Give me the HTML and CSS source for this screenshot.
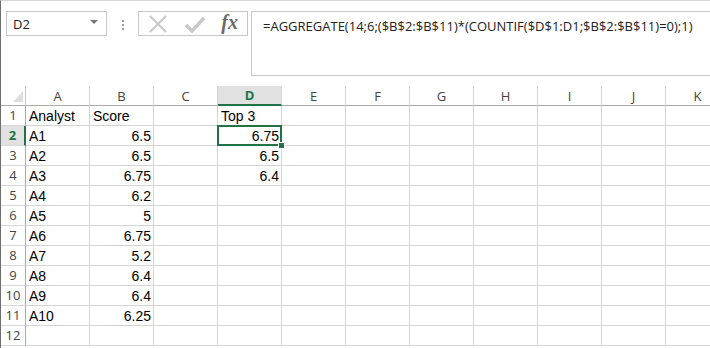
FILE: index.html
```html
<!DOCTYPE html>
<html lang="en">
<head>
    <meta charset="UTF-8">
    <title>Top 3 - AGGREGATE</title>
    <link rel="stylesheet" href="styles.css">
</head>
<body>
    <div class="sheet">
        <!-- Name box and formula bar -->
        <div class="toolbar">
            <div class="name-box">
                <span>D2</span>
                <span class="arrow"></span>
            </div>
            <div class="grip">
                <span></span><span></span><span></span>
            </div>
            <div class="fx-buttons">
                <svg class="fx-icon" width="20" height="20" viewBox="0 0 20 20">
                    <path d="M2 2 L18 18 M18 2 L2 18" stroke="#c8c8c8" stroke-width="2" fill="none"/>
                </svg>
                <svg class="fx-icon" width="22" height="20" viewBox="0 0 22 20">
                    <path d="M2 11 L8 17 L20 4" stroke="#c8c8c8" stroke-width="3.5" fill="none"/>
                </svg>
                <span class="fx-label">fx</span>
            </div>
            <div class="formula-bar">=AGGREGATE(14;6;($B$2:$B$11)*(COUNTIF($D$1:D1;$B$2:$B$11)=0);1)</div>
        </div>

        <!-- Worksheet grid -->
        <div class="grid" id="grid"></div>
    </div>

    <script>
        const columns = ['A', 'B', 'C', 'D', 'E', 'F', 'G', 'H', 'I', 'J', 'K'];
        const data = {
            1: { A: 'Analyst', B: 'Score', D: 'Top 3' },
            2: { A: 'A1', B: '6.5', D: '6.75' },
            3: { A: 'A2', B: '6.5', D: '6.5' },
            4: { A: 'A3', B: '6.75', D: '6.4' },
            5: { A: 'A4', B: '6.2' },
            6: { A: 'A5', B: '5' },
            7: { A: 'A6', B: '6.75' },
            8: { A: 'A7', B: '5.2' },
            9: { A: 'A8', B: '6.4' },
            10: { A: 'A9', B: '6.4' },
            11: { A: 'A10', B: '6.25' },
            12: {}
        };
        const grid = document.getElementById('grid');

        // Header row
        let html = '<div class="corner"><span class="corner-mark"></span></div>';
        columns.forEach(col => {
            html += `<div class="col-head${col === 'D' ? ' active' : ''}">${col}</div>`;
        });

        // Data rows
        for (let r = 1; r <= 12; r++) {
            html += `<div class="row-head${r === 2 ? ' active' : ''}">${r}</div>`;
            columns.forEach(col => {
                const value = data[r][col] || '';
                const isNumber = value !== '' && !isNaN(value);
                let cls = 'cell';
                if (isNumber) cls += ' num';
                if (r === 2 && col === 'D') cls += ' selected';
                html += `<div class="${cls}">${value}</div>`;
            });
        }
        grid.innerHTML = html;
    </script>
</body>
</html>
```

FILE: styles.css
```css
body {
    margin: 0;
    background-color: white;
    overflow: hidden;
}

.sheet {
    width: 710px;
    height: 348px;
    border-left: 1px solid #6e6e6e;
    border-top: 1px solid #d6d6d6;
    box-sizing: border-box;
    overflow: hidden;
}

/* Toolbar */
.toolbar {
    display: flex;
    align-items: flex-start;
    height: 85px;
    padding-top: 10px;
    box-sizing: border-box;
}

.name-box {
    display: flex;
    align-items: center;
    justify-content: space-between;
    margin-left: 5px;
    width: 101px;
    height: 25px;
    border: 1px solid #c6c6c6;
    box-sizing: border-box;
    padding: 0 8px 0 6px;
    font-family: "Open Sans", "Liberation Sans", sans-serif;
    font-size: 13px;
    color: #222;
}

.arrow {
    width: 0;
    height: 0;
    border-left: 4px solid transparent;
    border-right: 4px solid transparent;
    border-top: 4px solid #777;
    margin-top: -3px;
}

.grip {
    display: flex;
    flex-direction: column;
    gap: 2px;
    margin: 9px 14px 0 15px;
}

.grip span {
    width: 2px;
    height: 2px;
    background-color: #a0a0a0;
}

.fx-buttons {
    display: flex;
    align-items: center;
    justify-content: space-between;
    width: 110px;
    height: 25px;
    border: 1px solid #c6c6c6;
    box-sizing: border-box;
    padding: 0 9px 0 9px;
}

.fx-label {
    font-family: "Liberation Serif", serif;
    font-style: italic;
    font-weight: bold;
    font-size: 20px;
    color: #6a6a6a;
    margin-top: -3px;
}

.formula-bar {
    margin-left: 3px;
    flex: 1;
    height: 65px;
    border: 1px solid #c6c6c6;
    border-right: none;
    box-sizing: border-box;
    padding: 5px 0 0 11px;
    font-family: "Open Sans", "Liberation Sans", sans-serif;
    font-size: 13px;
    color: #222;
    white-space: nowrap;
}

/* Grid */
.grid {
    display: grid;
    grid-template-columns: 25px repeat(11, 64px);
    grid-template-rows: 20px repeat(13, 20px);
    font-family: "Liberation Sans", Arial, sans-serif;
    font-size: 14px;
    color: black;
}

.corner,
.col-head,
.row-head {
    background-color: white;
    color: #444;
    font-family: "Open Sans", "Liberation Sans", sans-serif;
    font-size: 13px;
    box-sizing: border-box;
}

.corner {
    position: relative;
    border-right: 1px solid #c6c6c6;
    border-bottom: 1px solid #ababab;
}

.corner-mark {
    position: absolute;
    left: 12px;
    bottom: 3px;
    width: 0;
    height: 0;
    border-left: 10px solid transparent;
    border-bottom: 11px solid #dfdfdf;
}

.col-head {
    display: flex;
    align-items: center;
    justify-content: center;
    border-right: 1px solid #d6d6d6;
    border-bottom: 1px solid #ababab;
}

.col-head.active {
    background-color: #e1e1e1;
    color: #217346;
    font-weight: bold;
    border-bottom: 2px solid #217346;
}

.row-head {
    display: flex;
    align-items: flex-end;
    justify-content: center;
    padding-bottom: 1px;
    border-right: 1px solid #ababab;
    border-bottom: 1px solid #d6d6d6;
}

.row-head.active {
    background-color: #e1e1e1;
    color: #217346;
    font-weight: bold;
    border-right: 2px solid #217346;
}

.cell {
    display: flex;
    align-items: flex-end;
    padding: 0 3px 1px 3px;
    border-right: 1px solid #d4d4d4;
    border-bottom: 1px solid #d4d4d4;
    box-sizing: border-box;
    white-space: nowrap;
}

.cell.num {
    justify-content: flex-end;
    padding-right: 2px;
}

.cell.selected {
    position: relative;
}

.cell.selected::before {
    content: "";
    position: absolute;
    left: -1px;
    top: -1px;
    right: -1px;
    bottom: -1px;
    border: 2px solid #217346;
}

.cell.selected::after {
    content: "";
    position: absolute;
    right: -4px;
    bottom: -4px;
    width: 5px;
    height: 5px;
    background-color: #217346;
    border: 1px solid white;
}
```
